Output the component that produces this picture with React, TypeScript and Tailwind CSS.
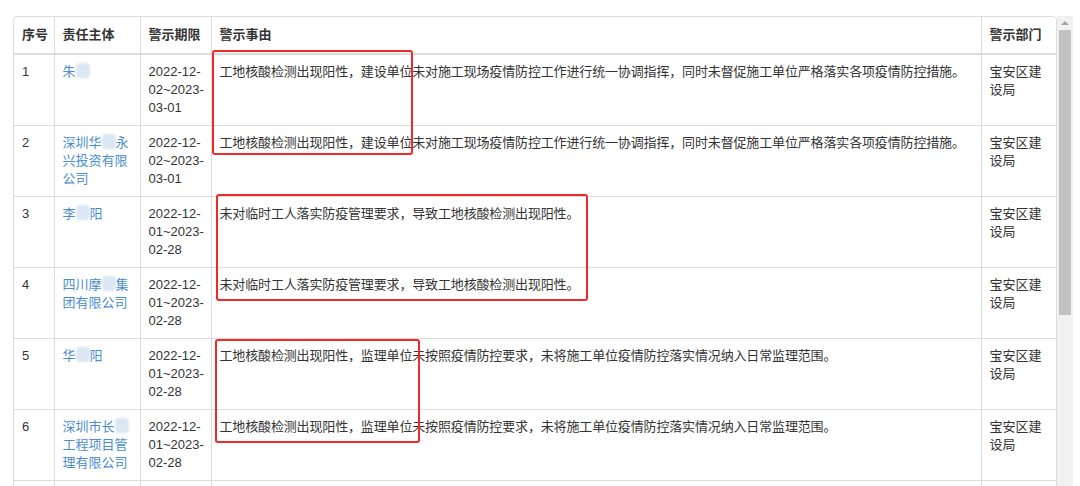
import type { ReactNode } from 'react';

type Row = {
    no: number;
    subject: ReactNode;
    period: string[];
    reason: string;
};

const Blur = () => (
    <span className="inline-block w-[14px] h-[15px] align-[-2px] rounded-[4px] bg-[#dce7f4] blur-[1px]" />
);

const r1 = '工地核酸检测出现阳性，建设单位未对施工现场疫情防控工作进行统一协调指挥，同时未督促施工单位严格落实各项疫情防控措施。';
const r2 = '未对临时工人落实防疫管理要求，导致工地核酸检测出现阳性。';
const r3 = '工地核酸检测出现阳性，监理单位未按照疫情防控要求，未将施工单位疫情防控落实情况纳入日常监理范围。';

const rows: Row[] = [
    { no: 1, subject: <>朱<Blur /></>, period: ['2022-12-', '02~2023-', '03-01'], reason: r1 },
    { no: 2, subject: <>深圳华<Blur />永兴投资有限公司</>, period: ['2022-12-', '02~2023-', '03-01'], reason: r1 },
    { no: 3, subject: <>李<Blur />阳</>, period: ['2022-12-', '01~2023-', '02-28'], reason: r2 },
    { no: 4, subject: <>四川摩<Blur />集团有限公司</>, period: ['2022-12-', '01~2023-', '02-28'], reason: r2 },
    { no: 5, subject: <>华<Blur />阳</>, period: ['2022-12-', '01~2023-', '02-28'], reason: r3 },
    { no: 6, subject: <>深圳市长<Blur />工程项目管理有限公司</>, period: ['2022-12-', '01~2023-', '02-28'], reason: r3 },
    { no: 7, subject: <>深圳<Blur /></>, period: ['2022-12-', '01~2023-', '02-28'], reason: r3 },
];

export default function App() {
    return (
        <div className="w-[1080px] h-[486px] overflow-hidden bg-white text-[13px] leading-[18px] text-[#333]" style={{ fontFamily: '"Liberation Sans", "Noto Sans CJK SC", sans-serif' }}>
            <div className="ml-[13px] mt-[16px] flex">
                {/* table */}
                <div className="relative w-[1044px] border border-[#ddd] rounded-t-[4px]">
                    <table className="table-fixed border-collapse w-full">
                        <colgroup>
                            <col className="w-[40px]" />
                            <col className="w-[86px]" />
                            <col className="w-[71px]" />
                            <col className="w-[770px]" />
                            <col className="w-[75px]" />
                        </colgroup>
                        <thead>
                            <tr className="border-b-2 border-[#ddd]">
                                <th className="pl-2 pr-1 py-[9px] text-left font-bold whitespace-nowrap">序号</th>
                                <th className="px-2 py-[9px] text-left font-bold border-l border-[#ddd]">责任主体</th>
                                <th className="px-2 py-[9px] text-left font-bold border-l border-[#ddd] whitespace-nowrap">警示期限</th>
                                <th className="px-2 py-[9px] text-left font-bold border-l border-[#ddd]">警示事由</th>
                                <th className="px-2 py-[9px] text-left font-bold border-l border-[#ddd]">警示部门</th>
                            </tr>
                        </thead>
                        <tbody>
                            {rows.map((r) => (
                                <tr key={r.no} className="border-b border-[#ddd] align-top">
                                    <td className="px-2 py-2 h-[71px]">{r.no}</td>
                                    <td className="px-2 py-2 border-l border-[#ddd] text-[#4a8cd0] break-all">{r.subject}</td>
                                    <td className="px-2 py-2 border-l border-[#ddd]">
                                        {r.period.map((p, i) => <div key={i}>{p}</div>)}
                                    </td>
                                    <td className="px-2 py-2 border-l border-[#ddd] whitespace-nowrap tracking-[-0.15px]">{r.reason}</td>
                                    <td className="px-2 py-2 border-l border-[#ddd]">宝安区建设局</td>
                                </tr>
                            ))}
                        </tbody>
                    </table>

                    {/* red highlight boxes */}
                    <div className="absolute left-[198px] top-[33px] w-[201px] h-[105px] border-2 border-[#ee2a2a] rounded-[3px]" />
                    <div className="absolute left-[202px] top-[177px] w-[372px] h-[107px] border-2 border-[#ee2a2a] rounded-[3px]" />
                    <div className="absolute left-[201px] top-[322px] w-[205px] h-[104px] border-2 border-[#ee2a2a] rounded-[3px]" />
                </div>

                {/* scrollbar */}
                <div className="w-[16px] h-[480px] bg-[#f1f1f1] flex flex-col items-center">
                    <div className="h-[14px] flex items-center justify-center">
                        <div className="w-0 h-0 border-l-[4px] border-r-[4px] border-b-[4px] border-l-transparent border-r-transparent border-b-[#a3a3a3]" />
                    </div>
                    <div className="w-[12px] h-[285px] bg-[#c1c1c1]" />
                </div>
            </div>
        </div>
    );
}
